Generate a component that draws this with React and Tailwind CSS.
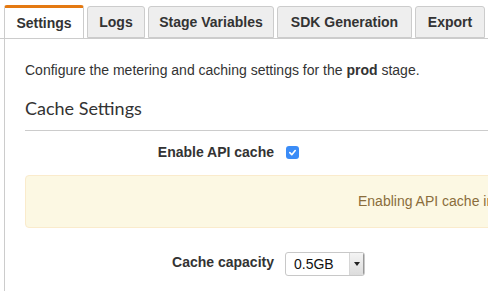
import React from "react";

const tabs = [
  { label: "Settings", w: "w-[80px]" },
  { label: "Logs", w: "w-[58px]" },
  { label: "Stage Variables", w: "w-[126px]" },
  { label: "SDK Generation", w: "w-[135px]" },
  { label: "Export", w: "w-[70px]" },
  { label: "Deployment History", w: "w-[150px]" },
];

export default function App() {
  return (
    <div className="w-[488px] h-[291px] overflow-hidden bg-white text-[#333] font-['Liberation_Sans',Arial,sans-serif]">
      {/* tab strip */}
      <div className="flex gap-[3px] pl-[4px] pt-[5px] border-b border-[#ccc] whitespace-nowrap">
        {tabs.map((t, i) => (
          <div
            key={t.label}
            className={
              i === 0
                ? `${t.w} shrink-0 h-[33px] -mb-px flex items-center justify-center bg-white border-x border-[#ccc] border-t-[3px] border-t-[#e47911] rounded-t-[3px] text-[14px] font-bold text-[#333]`
                : `${t.w} shrink-0 h-[32px] mt-px flex items-center justify-center bg-[#eee] border border-[#ccc] rounded-t-[3px] text-[14px] font-bold text-[#333]`
            }
          >
            {t.label}
          </div>
        ))}
      </div>

      {/* settings panel */}
      <div className="ml-[4px] h-[260px] border-l border-[#ccc] pl-[20px] pt-[21px]">
        <p className="text-[14px] leading-[20px] whitespace-nowrap">
          Configure the metering and caching settings for the <b>prod</b> stage.
        </p>

        <h3 className="mt-[16px] pb-[10px] border-b border-[#ccc] font-['Lato',sans-serif] text-[18px] leading-[24px] text-[#333]">
          Cache Settings
        </h3>

        <div className="mt-[11px] flex items-center h-[20px]">
          <div className="w-[249px] text-right text-[14px] font-bold">Enable API cache</div>
          <div className="ml-[12px] w-[13px] h-[13px] rounded-[3px] bg-[#3b8cf7] flex items-center justify-center">
            <svg width="9" height="9" viewBox="0 0 10 10" fill="none">
              <path d="M2 5.2l2.2 2.2L8 2.8" stroke="white" strokeWidth="1.8" strokeLinecap="round" strokeLinejoin="round" />
            </svg>
          </div>
        </div>

        <div className="mt-[13px] w-[600px] h-[53px] flex items-center pl-[332px] bg-[#fcf8e3] border border-[#faebcc] rounded-[4px] text-[14px] text-[#8a6d3b] whitespace-nowrap">
          Enabling API cache increases cost
        </div>

        <div className="mt-[24px] flex items-start">
          <div className="w-[249px] h-[20px] leading-[20px] text-right text-[14px] font-bold">Cache capacity</div>
          <div className="ml-[11px] w-[80px] h-[24px] flex border border-[#c8c8c8] rounded-[3px] overflow-hidden bg-white">
            <span className="flex-1 pl-[8px] flex items-center text-[14px] text-[#111]">0.5GB</span>
            <span className="w-[15px] flex items-center justify-center border-l border-[#d6d6d6] border-r border-r-[#999] bg-gradient-to-b from-[#f4f4f4] to-[#dcdcdc]">
              <span className="w-0 h-0 border-x-[3px] border-x-transparent border-t-[4px] border-t-[#222]" />
            </span>
          </div>
        </div>
      </div>
    </div>
  );
}
